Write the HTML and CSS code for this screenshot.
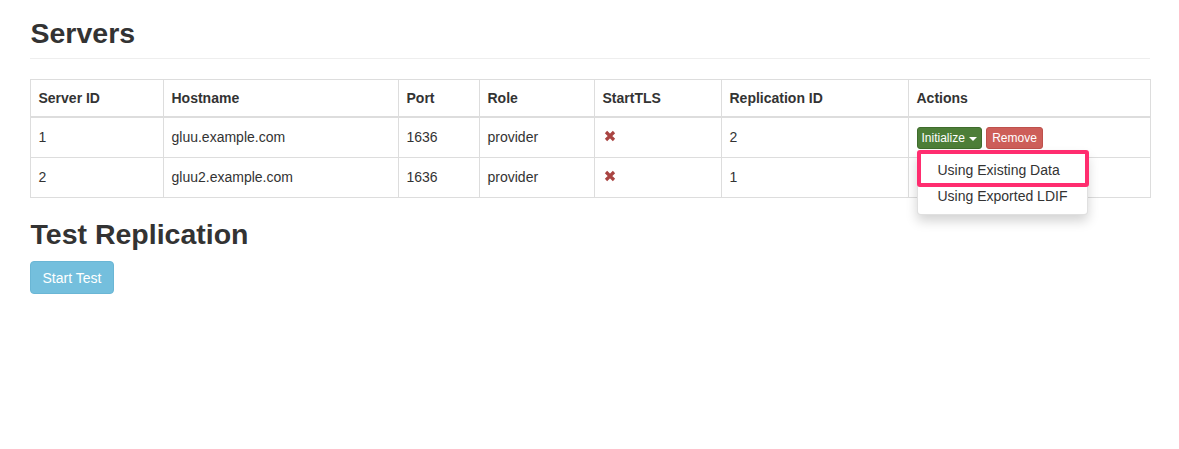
FILE: index.html
```html
<!DOCTYPE html>
<html>
<head>
<meta charset="utf-8">
<link rel="stylesheet" href="styles.css">
</head>
<body>
<div class="container">
  <div class="page-header"><h2>Servers</h2></div>
  <table class="servers">
    <colgroup>
      <col class="c1"><col class="c2"><col class="c3"><col class="c4"><col class="c5"><col class="c6"><col class="c7">
    </colgroup>
    <thead>
      <tr><th>Server ID</th><th>Hostname</th><th>Port</th><th>Role</th><th>StartTLS</th><th>Replication ID</th><th>Actions</th></tr>
    </thead>
    <tbody>
      <tr>
        <td>1</td><td>gluu.example.com</td><td>1636</td><td>provider</td>
        <td><svg class="xmark" width="14" height="14" viewBox="0 0 14 14"><path d="M3 3 L11 11 M11 3 L3 11" stroke="#a94442" stroke-width="3.2" stroke-linecap="butt"/></svg></td>
        <td>2</td>
        <td>
          <div class="actions">
            <div class="btn-group">
              <span class="btn btn-xs btn-success">Initialize <span class="caret"></span></span>
              <div class="dropdown-menu">
                <div class="item">Using Existing Data</div>
                <div class="item">Using Exported LDIF</div>
                <div class="highlight"></div>
              </div>
            </div>
            <span class="btn btn-xs btn-danger">Remove</span>
          </div>
        </td>
      </tr>
      <tr>
        <td>2</td><td>gluu2.example.com</td><td>1636</td><td>provider</td>
        <td><svg class="xmark" width="14" height="14" viewBox="0 0 14 14"><path d="M3 3 L11 11 M11 3 L3 11" stroke="#a94442" stroke-width="3.2" stroke-linecap="butt"/></svg></td>
        <td>1</td>
        <td>
          <div class="actions">
            <span class="btn btn-xs btn-success hidden-btn"></span>
          </div>
        </td>
      </tr>
    </tbody>
  </table>
  <h2 class="section">Test Replication</h2>
  <span class="btn btn-info">Start Test</span>
</div>
</body>
</html>
```

FILE: styles.css
```css
* { box-sizing: border-box; }
body {
  margin: 0;
  font-family: "Liberation Sans", Arial, Helvetica, sans-serif;
  font-size: 14px;
  line-height: 20px;
  color: #333;
  background: #fff;
}
.container {
  width: 1120px;
  margin: 0 auto;
}
.page-header {
  padding-bottom: 8px;
  border-bottom: 1px solid #eee;
  margin: 0 0 20px 0;
}
h2 {
  font-size: 28.5px;
  font-weight: bold;
  line-height: 33px;
  margin: 0;
  padding-left: 1px;
}
.page-header h2 { padding-top: 17px; }
.section { margin: 20px 0 10px; }
.servers {
  width: 1120px;
  table-layout: fixed;
  border-collapse: collapse;
  border-spacing: 0;
  border: 1px solid #ddd;
}
.c1 { width: 133px; } .c2 { width: 235px; } .c3 { width: 81px; } .c4 { width: 115px; }
.c5 { width: 127px; } .c6 { width: 187px; } .c7 { width: 242px; }
.servers th, .servers td {
  border: 1px solid #ddd;
  text-align: left;
  vertical-align: top;
  padding: 8px;
}
.servers th {
  font-weight: bold;
  border-bottom-width: 2px;
}
.servers td {
  padding: 9px 8px 8px;
  height: 39px;
}
.xmark { vertical-align: -1px; display: inline-block; }
.actions { display: flex; gap: 4px; align-items: flex-start; }
.btn-group { position: relative; }
.btn {
  display: inline-block;
  border: 1px solid transparent;
  border-radius: 4px;
  color: #fff;
  white-space: nowrap;
}
.btn-xs {
  font-size: 12px;
  line-height: 18px;
  padding: 1px 4px;
  border-radius: 3px;
  height: 22px;
}
.hidden-btn { width: 65px; }
.btn-success { background: #4d7e38; border-color: #3f6c2c; }
.btn-danger { background: #cd5e59; border-color: #be514c; padding: 1px 5px; }
.btn-info {
  background: #74bfdd;
  border-color: #6ab6d5;
  font-size: 14px;
  line-height: 20px;
  padding: 6px 12px;
  height: 33px;
}
.caret {
  display: inline-block;
  width: 0; height: 0;
  margin-left: 1px;
  vertical-align: middle;
  border-top: 4px solid #fff;
  border-left: 4px solid transparent;
  border-right: 4px solid transparent;
}
.dropdown-menu {
  position: absolute;
  top: 24px;
  left: 0;
  z-index: 10;
  background: #fff;
  border: 1px solid rgba(0,0,0,.12);
  border-radius: 4px;
  box-shadow: 0 6px 12px rgba(0,0,0,.175);
  padding: 5px 0;
  white-space: nowrap;
}
.item {
  padding: 3px 20px;
  line-height: 20px;
  color: #333;
}
.highlight {
  position: absolute;
  top: -2px;
  left: -1px;
  right: -2px;
  height: 37px;
  border: 4px solid #ff2d6f;
  border-radius: 3px;
}
```
